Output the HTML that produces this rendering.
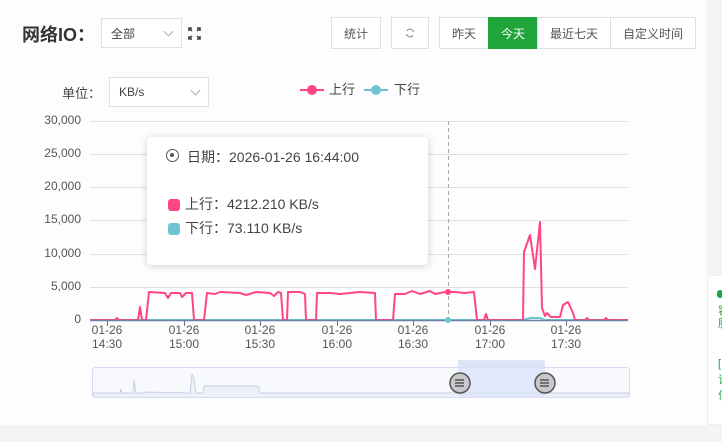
<!DOCTYPE html>
<html><head><meta charset="utf-8"><style>
*{margin:0;padding:0;box-sizing:border-box}
body{width:722px;height:442px;background:#f4f4f5;font-family:"Liberation Sans","Noto Sans CJK SC",sans-serif;position:relative;overflow:hidden;color:#555}
.card{position:absolute;left:0;top:0;width:707px;height:425px;background:#fdfdfe}
.abs{position:absolute}
.btn{position:absolute;top:17px;height:32px;border:1px solid #dcdfe6;background:#fff;font-size:12px;color:#555;display:flex;align-items:center;justify-content:center}
.sel{position:absolute;border:1px solid #dcdfe6;background:#fff;font-size:12px;color:#444;padding-left:9px;display:flex;align-items:center}
.chev{position:absolute;right:9px;top:50%;width:7px;height:7px;border-right:1px solid #aaa;border-bottom:1px solid #aaa;transform:translateY(-70%) rotate(45deg)}
.yl{position:absolute;right:641px;font-size:12px;color:#555;text-align:right}
.xl{position:absolute;top:323px;font-size:12px;color:#555;text-align:center;width:40px;line-height:14px}
.cj{font-family:"Noto Sans CJK SC",sans-serif}
</style></head><body>
<div class="card"></div>
<div class="abs" style="left:22px;top:21px;font-size:18px;font-weight:bold;color:#333">网络IO<span class="cj">：</span></div>
<div class="sel" style="left:101px;top:18px;width:81px;height:30px">全部<span class="chev"></span></div>
<svg class="abs" style="left:188px;top:27px" width="13" height="13" viewBox="0 0 13 13" fill="none" stroke="#444" stroke-width="1.6"><path d="M1 4V1h3M9 1h3v3M12 9v3H9M4 12H1V9M1 1l3 3M12 1L9 4M12 12L9 9M1 12l3-3"/></svg>
<div class="btn" style="left:331px;width:50px">统计</div>
<div class="btn" style="left:391px;width:38px"><svg width="10" height="10" viewBox="0 0 10 10" fill="none" stroke="#888" stroke-width="1"><path d="M8.5 4A3.5 3.5 0 0 0 2 3M1.5 6A3.5 3.5 0 0 0 8 7"/></svg></div>
<div class="btn" style="left:439px;width:50px">昨天</div>
<div class="btn" style="left:488px;width:50px;background:#20a53a;border-color:#20a53a;color:#fff">今天</div>
<div class="btn" style="left:537px;width:74px">最近七天</div>
<div class="btn" style="left:610px;width:86px">自定义时间</div>
<div class="abs" style="left:62px;top:83px;font-size:13px;color:#444">单位<span class="cj">：</span></div>
<div class="sel" style="left:109px;top:77px;width:100px;height:30px">KB/s<span class="chev"></span></div>
<svg class="abs" style="left:300px;top:82px" width="130" height="16"><line x1="0" y1="8" x2="24" y2="8" stroke="#ff4582" stroke-width="2"/><circle cx="12" cy="8" r="5" fill="#ff4582"/><text x="29" y="12" font-size="13" fill="#444" font-family="Liberation Sans,Noto Sans CJK SC,sans-serif">上行</text><line x1="64" y1="8" x2="88" y2="8" stroke="#6ec4d3" stroke-width="2"/><circle cx="76" cy="8" r="5" fill="#6ec4d3"/><text x="94" y="12" font-size="13" fill="#444" font-family="Liberation Sans,Noto Sans CJK SC,sans-serif">下行</text></svg>
<div class="yl" style="top:113px">30,000</div>
<div class="yl" style="top:146px">25,000</div>
<div class="yl" style="top:179px">20,000</div>
<div class="yl" style="top:212px">15,000</div>
<div class="yl" style="top:246px">10,000</div>
<div class="yl" style="top:279px">5,000</div>
<div class="yl" style="top:312px">0</div>
<svg class="abs" style="left:0;top:0" width="722" height="442">
<g stroke="#e0e0e4" stroke-width="1">
<line x1="90" y1="121.5" x2="628" y2="121.5"/><line x1="90" y1="154.5" x2="628" y2="154.5"/><line x1="90" y1="187.5" x2="628" y2="187.5"/><line x1="90" y1="220.5" x2="628" y2="220.5"/><line x1="90" y1="254.5" x2="628" y2="254.5"/><line x1="90" y1="287.5" x2="628" y2="287.5"/></g>
<line x1="448.5" y1="121" x2="448.5" y2="320" stroke="#aaa" stroke-dasharray="4,3"/>
<line x1="90" y1="320.5" x2="628" y2="320.5" stroke="#6e7079"/>
<g stroke="#6e7079"><line x1="107.5" y1="321" x2="107.5" y2="326"/><line x1="184.5" y1="321" x2="184.5" y2="326"/><line x1="260.5" y1="321" x2="260.5" y2="326"/><line x1="337.5" y1="321" x2="337.5" y2="326"/><line x1="413.5" y1="321" x2="413.5" y2="326"/><line x1="490.5" y1="321" x2="490.5" y2="326"/><line x1="566.5" y1="321" x2="566.5" y2="326"/></g>
<polyline fill="none" stroke="#6ec4d3" stroke-width="2" points="90,320 523,320 530,318 540,318 545,320 628,320"/>
<polyline fill="none" stroke="#ff4582" stroke-width="2" stroke-linejoin="round" points="90,320 115,320 117,318 119,320 138,320 140,307 142,320 146,320 149,292 165,293 168,298 171,293 180,293 182,297 186,293 192,293 194,320 204,320 207,293 215,294 220,292 240,293 246,295 256,292 270,293 274,296 278,292 281,293 283,320 287,320 288,292 300,292 305,294 306,320 316,320 317,293 330,293 340,294 360,292 375,293 376,320 393,320 395,294 405,294 412,291 420,294 430,291 435,294 445,292 455,292 465,293 474,292 477,320 484,320 486,314 488,320 523,320 524,252 530,235 535,269 540,222 542,308 545,316 547,313 551,317 560,317 563,305 568,302 573,313 575,320 585,320 587,318 589,320 604,320 606,318 608,320 628,320"/>
<line x1="90" y1="320.5" x2="628" y2="320.5" stroke="#6b83a8" stroke-width="1.5"/>
<circle cx="448" cy="292" r="3" fill="#ff4582"/><circle cx="448" cy="320" r="3" fill="#6ec4d3"/>
<rect x="92.5" y="367.5" width="537" height="30" rx="3" fill="#f8f9fd" stroke="#d5dbf0"/>
<polyline fill="#eef0f7" stroke="#c9d0e6" stroke-width="1" points="93,397 93,393 120,393 121,389 122,393 133,393 134,380 136,393 144,393 145,392 190,393 192,374 194,379 196,393 203,393 204,386 230,386 248,386 258,386 260,393 500,393 629,393 629,397"/>
<rect x="458" y="360" width="87" height="7" fill="#dfe5f5"/>
<rect x="458" y="367.5" width="87" height="30" fill="#dbe4fa" opacity="0.8"/>
<g><circle cx="460" cy="383" r="10" fill="#c8c8cc" stroke="#555" stroke-width="1.5"/><path d="M455 380h9M455 383h9M455 386h9" stroke="#555" stroke-width="1.5"/>
<circle cx="545" cy="383" r="10" fill="#c8c8cc" stroke="#555" stroke-width="1.5"/><path d="M540 380h9M540 383h9M540 386h9" stroke="#555" stroke-width="1.5"/></g>
</svg>
<div class="xl" style="left:87px">01-26<br>14:30</div>
<div class="xl" style="left:164px">01-26<br>15:00</div>
<div class="xl" style="left:240px">01-26<br>15:30</div>
<div class="xl" style="left:317px">01-26<br>16:00</div>
<div class="xl" style="left:393px">01-26<br>16:30</div>
<div class="xl" style="left:470px">01-26<br>17:00</div>
<div class="xl" style="left:546px">01-26<br>17:30</div>
<div class="abs" style="left:147px;top:137px;width:281px;height:128px;background:#fff;border-radius:4px;box-shadow:0 1px 8px rgba(0,0,0,0.18);font-size:14px;color:#444">
<div class="abs" style="left:19px;top:12px;width:13px;height:13px;border:1.5px solid #555;border-radius:50%"><div style="width:4px;height:4px;background:#555;border-radius:50%;margin:3px"></div></div>
<div class="abs" style="left:40px;top:10px">日期<span class="cj">：</span>2026-01-26 16:44:00</div>
<div class="abs" style="left:21px;top:62px;width:12px;height:12px;border-radius:3px;background:#ff4582"></div>
<div class="abs" style="left:38px;top:57px">上行<span class="cj">：</span>4212.210 KB/s</div>
<div class="abs" style="left:21px;top:86px;width:12px;height:12px;border-radius:3px;background:#6ec4d3"></div>
<div class="abs" style="left:38px;top:81px">下行<span class="cj">：</span>73.110 KB/s</div>
</div>
<div class="abs" style="left:707px;top:275px;width:20px;height:150px;background:#fff;border:1px solid #eee;border-radius:3px"></div>
<div class="abs" style="left:717px;top:290px;width:6px;height:8px;background:#20a53a;border-radius:3px"></div>
<div class="abs" style="left:718px;top:305px;font-size:11px;color:#20a53a;line-height:13px">容<br>服</div>
<div class="abs" style="left:718px;top:356px;font-size:11px;color:#20a53a;line-height:16px">[<br>订<br>信</div>
</body></html>
